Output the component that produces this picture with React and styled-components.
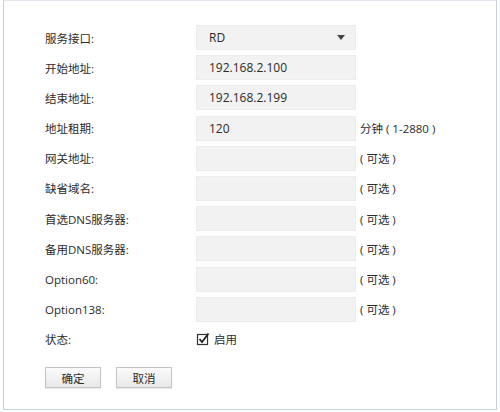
import styled, { createGlobalStyle } from "styled-components";

const GlobalStyle = createGlobalStyle`
  body {
    margin: 0;
    background: #ffffff;
    font-family: "Open Sans", "Noto Sans CJK SC", sans-serif;
    color: #2b2b2b;
  }
`;

const rows = [
  { label: "服务接口:", value: "RD", select: true },
  { label: "开始地址:", value: "192.168.2.100" },
  { label: "结束地址:", value: "192.168.2.199" },
  { label: "地址租期:", value: "120", hint: "分钟 ( 1-2880 )" },
  { label: "网关地址:", value: "", hint: "( 可选 )" },
  { label: "缺省域名:", value: "", hint: "( 可选 )" },
  { label: "首选DNS服务器:", value: "", hint: "( 可选 )" },
  { label: "备用DNS服务器:", value: "", hint: "( 可选 )" },
  { label: "Option60:", value: "", hint: "( 可选 )" },
  { label: "Option138:", value: "", hint: "( 可选 )" },
];

export default function App() {
  return (
    <>
      <GlobalStyle />
      <Frame>
        <Form>
          {rows.map((row) => (
            <Row key={row.label}>
              <Label>{row.label}</Label>
              <Field>
                <FieldText>{row.value}</FieldText>
                {row.select && <Caret />}
              </Field>
              {row.hint && <Hint>{row.hint}</Hint>}
            </Row>
          ))}
          <Row>
            <Label>状态:</Label>
            <CheckWrap>
              <svg width="14" height="14" viewBox="0 0 14 14">
                <rect x="1.5" y="2.5" width="10" height="10" fill="#fff" stroke="#333" strokeWidth="1.2" />
                <path d="M3.5 7 L6 10 L12.5 1.5" fill="none" stroke="#222" strokeWidth="1.8" />
              </svg>
              <span>启用</span>
            </CheckWrap>
          </Row>
          <Buttons>
            <Button>确定</Button>
            <Button>取消</Button>
          </Buttons>
        </Form>
      </Frame>
    </>
  );
}

const Frame = styled.div`
  box-sizing: border-box;
  margin: 0 3px;
  height: 410px;
  border: 1px solid #c6d0dc;
  border-top-color: #e3e8ee;
  background: #fff;
`;

const Form = styled.div`
  padding: 24px 0 0 41px;
  display: flex;
  flex-direction: column;
  gap: 5.2px;
`;

const Row = styled.div`
  display: flex;
  align-items: center;
  height: 25px;
`;

const Label = styled.div`
  width: 151px;
  font-size: 11.5px;
  color: #2b2b2b;
`;

const Field = styled.div`
  box-sizing: border-box;
  width: 160px;
  height: 25px;
  display: flex;
  align-items: center;
  justify-content: space-between;
  padding: 0 10px 0 12px;
  background: #f2f2f2;
  border: 1px solid #ececec;
`;

const FieldText = styled.span`
  font-size: 12px;
  color: #2b2b2b;
`;

const Caret = styled.span`
  width: 0;
  height: 0;
  border-left: 4px solid transparent;
  border-right: 4px solid transparent;
  border-top: 5px solid #444;
`;

const Hint = styled.span`
  margin-left: 4px;
  font-size: 11.5px;
  color: #2b2b2b;
  white-space: pre;
`;

const CheckWrap = styled.div`
  display: flex;
  align-items: center;
  gap: 4px;
  font-size: 11.5px;
  color: #2b2b2b;
`;

const Buttons = styled.div`
  display: flex;
  gap: 15px;
  margin-top: 10px;
`;

const Button = styled.button`
  width: 56px;
  height: 21px;
  padding: 0;
  font-family: "Open Sans", "Noto Sans CJK SC", sans-serif;
  font-size: 11.5px;
  color: #2b2b2b;
  background: linear-gradient(#fbfbfb, #e8e8e8);
  border: 1px solid #c4c4c4;
  border-radius: 0;
  box-shadow: 0 1px 1px rgba(0, 0, 0, 0.08);
`;
